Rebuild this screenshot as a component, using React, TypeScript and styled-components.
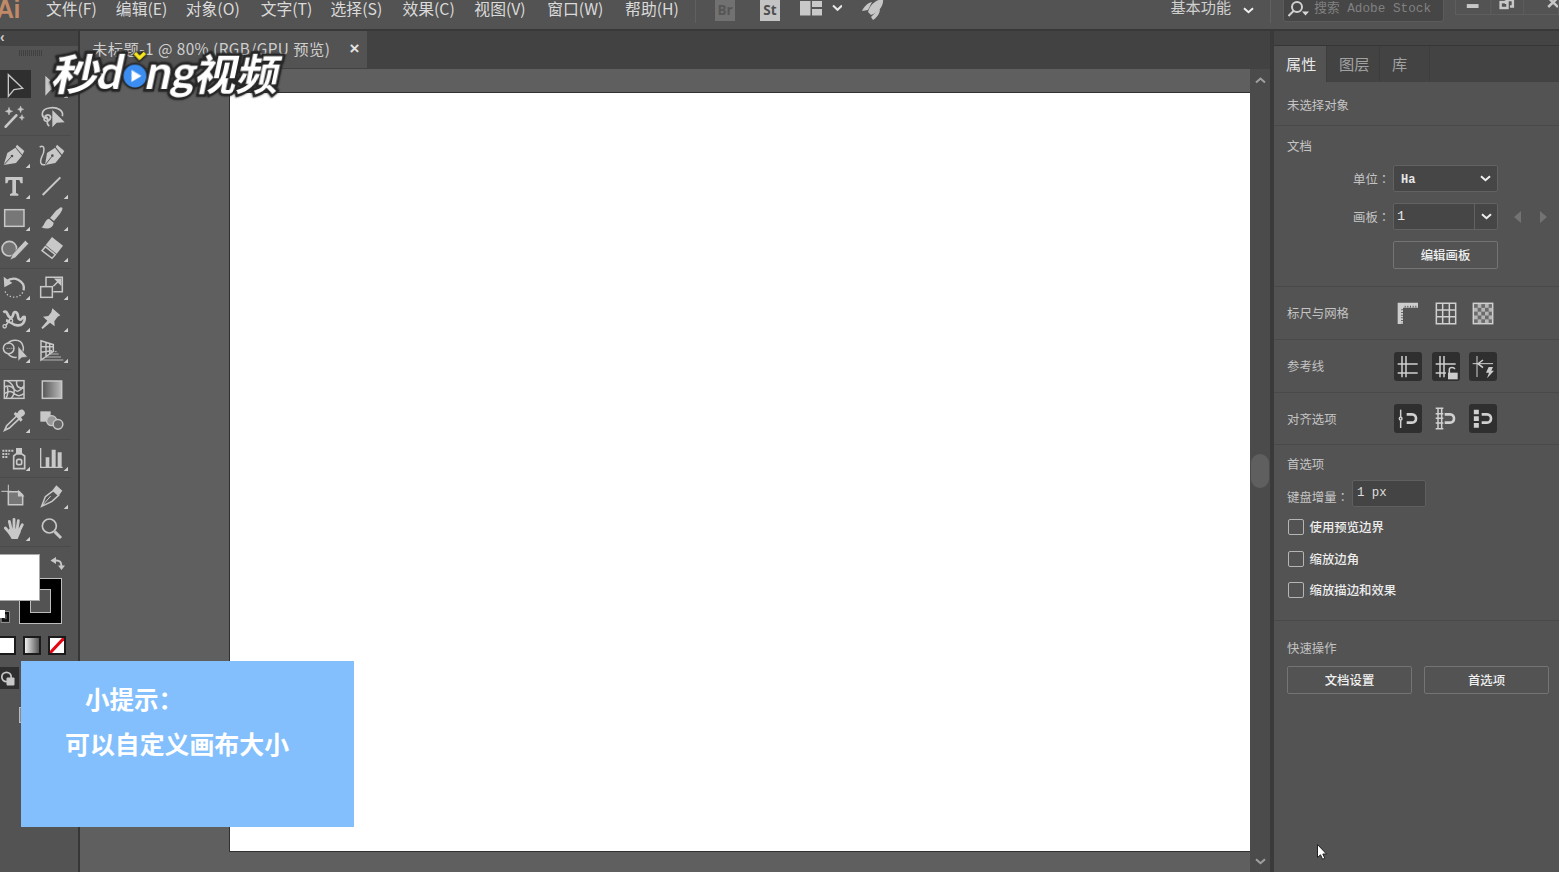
import React from 'react';
import styled, { createGlobalStyle } from 'styled-components';

const GlobalStyle = createGlobalStyle`
  *, *::before, *::after { box-sizing: border-box; }
  html, body { margin: 0; padding: 0; background: #535353; overflow: hidden; }
  body { font-family: "Noto Sans CJK SC", sans-serif; color: #d6d6d6; }
`;

const Window = styled.div`
  position: relative;
  width: 1559px;
  height: 872px;
  display: flex;
  flex-direction: column;
  overflow: hidden;
  background: #535353;
`;

/* ---------- menu bar ---------- */
const MenuBar = styled.header`
  height: 31px;
  flex: none;
  display: flex;
  background: #535353;
  border-bottom: 2px solid #383838;
`;
const Brand = styled.div`
  width: 46px;
  font: 700 25px/19px "Liberation Sans", sans-serif;
  color: #c08a68;
  margin-left: -4px;
  margin-right: 4px;
  letter-spacing: -0.5px;
`;
const MenuItem = styled.div<{ $w: number }>`
  width: ${p => p.$w}px;
  font-size: 15.8px;
  line-height: 18px;
  white-space: nowrap;
  color: #dadada;
`;
const Rule = styled.div<{ $h?: number }>`
  width: 1px;
  height: ${p => p.$h ?? 23}px;
  background: #606060;
`;
const AppBadge = styled.div<{ $dim?: boolean }>`
  width: 20px;
  height: 21px;
  font: 700 13.5px/20px "Open Sans", sans-serif;
  text-align: center;
  color: ${p => (p.$dim ? '#565656' : '#4e4e4e')};
  background: ${p => (p.$dim ? '#717171' : '#c4c4c4')};
`;
const Quick = styled.div`
  display: flex;
  width: 462px;
  padding-left: 19px;
  gap: 25px;
  svg { display: block; }
`;
const Workspace = styled.div`
  display: flex;
  justify-content: space-between;
  width: 113px;
  padding: 0 16px 0 13px;
  font-size: 15.2px;
  line-height: 12px;
  white-space: nowrap;
  color: #d0d0d0;
  svg { margin-top: 7px; }
`;
const Search = styled.div`
  display: flex;
  width: 161px;
  height: 22px;
  margin-left: 12px;
  padding-left: 4px;
  background: #464646;
  border: 1px solid #5b5b5b;
  border-top: 0;
  border-radius: 0 0 3px 3px;
  font: 12.7px/18px "Liberation Mono", "Noto Sans CJK SC", monospace;
  color: #818181;
  white-space: nowrap;
  svg { flex: none; margin-right: 4px; }
`;
const WindowButtons = styled.div`
  display: flex;
  margin-left: 11px;
  width: 104px;
  height: 15px;
  border: 1px solid #5e5e5e;
  border-top: 0;
`;

/* ---------- body ---------- */
const Body = styled.div`
  flex: 1;
  display: flex;
  min-height: 0;
`;
const ToolColumn = styled.aside`
  width: 80px;
  flex: none;
  overflow: hidden;
  border-right: 2px solid #363636;
`;
const ToolHeader = styled.div`
  height: 15px;
  background: #444;
  font: 700 14px/12px "Liberation Sans", sans-serif;
  color: #ccc;
`;
const Grip = styled.div`
  height: 6px;
  width: 24px;
  margin: 4px 0 13px 19px;
  background: repeating-linear-gradient(90deg, #404040 0 1px, #535353 1px 2px);
`;
const ToolGroup = styled.div`
  display: flex;
  flex-wrap: wrap;
  width: 76px;
  margin-left: -5px;
  padding-bottom: 3px;
  margin-bottom: 2.7px;
  border-bottom: 1px solid #4a4a4a;
`;
const Tool = styled.div<{ $active?: boolean }>`
  width: 38px;
  height: 31.5px;
  background: ${p => (p.$active ? 'linear-gradient(#2f2f2f,#2f2f2f) 0 1px / 36px 28px no-repeat' : 'none')};
  svg { display: block; }
`;
const ColorArea = styled.div`
  position: relative;
  height: 87px;
  margin-top: -1px;
`;
const StrokeSwatch = styled.div`
  position: absolute;
  left: 19px;
  top: 29px;
  width: 43px;
  height: 46px;
  border: 1px solid #bdbdbd;
  background: #000;
  padding: 10px;
  &::after { content: ''; display: block; height: 100%; background: #535353; border: 1px solid #bdbdbd; }
`;
const FillSwatch = styled.div`
  position: absolute;
  left: -2px;
  top: 5px;
  width: 42px;
  height: 47px;
  background: #fff;
  border: 1px solid #aaa;
`;
const SwapIcon = styled.svg`
  position: absolute;
  left: 50px;
  top: 7px;
`;
const DefaultIcon = styled.svg`
  position: absolute;
  left: 0;
  top: 60px;
`;
const Modes = styled.div`
  display: flex;
  gap: 7px;
  margin-left: -2px;
`;
const Mode = styled.div<{ $bg: string }>`
  width: 18px;
  height: 19px;
  border: 2px solid #1b1b1b;
  background: ${p => p.$bg};
  svg { display: block; }
`;
const DrawMode = styled.div`
  width: 19px;
  height: 22px;
  margin-top: 12px;
  background: #2f2f2f;
`;
const ScreenMode = styled.div`
  width: 14px;
  height: 16px;
  margin: 18px 0 0 19px;
  background: #888;
  border: 1px solid #bbb;
`;

/* ---------- document ---------- */
const Document = styled.main`
  width: 1190px;
  flex: none;
  display: flex;
  flex-direction: column;
`;
const TabStrip = styled.div`
  height: 38px;
  flex: none;
  background: #424242;
`;
const DocTab = styled.div`
  display: flex;
  justify-content: space-between;
  width: 287px;
  height: 37px;
  padding: 0 7px 0 12px;
  background: #535353;
  color: #cfcfcf;
  font-size: 15.3px;
  letter-spacing: 0.46px;
  line-height: 34px;
  white-space: nowrap;
`;
const CloseMark = styled.span`
  font: 700 17px/35px "Liberation Sans", sans-serif;
  color: #e2e2e2;
`;
const CanvasRow = styled.div`
  flex: 1;
  display: flex;
  min-height: 0;
`;
const Pasteboard = styled.div`
  flex: 1;
  background: #5f5f5f;
  padding: 23px 0 20px 149px;
`;
const Artboard = styled.div`
  height: 100%;
  background: #fff;
  border: 1px solid #303030;
  border-right: 0;
`;
const ScrollBar = styled.div`
  width: 20px;
  display: flex;
  flex-direction: column;
  align-items: center;
  justify-content: space-between;
  padding: 8px 0 7px;
  background: #4b4b4b;
`;
const Thumb = styled.div`
  width: 18px;
  height: 34px;
  border-radius: 9px;
  background: #5f5f5f;
`;

/* ---------- properties panel ---------- */
const Panel = styled.aside`
  flex: 1;
  border-left: 4px solid #3a3a3a;
  display: flex;
  flex-direction: column;
  font-family: "Liberation Mono", "Noto Sans CJK SC", monospace;
  font-size: 12.4px;
`;
const PanelHeader = styled.div`
  height: 15px;
  background: #444;
  border-bottom: 1px solid #363636;
`;
const PanelTabs = styled.div`
  display: flex;
  height: 36px;
  background: #434343;
`;
const PanelTab = styled.div<{ $w: number; $active?: boolean }>`
  width: ${p => p.$w}px;
  padding-left: 12px;
  font: 15.2px/34px "Noto Sans CJK SC", sans-serif;
  background: ${p => (p.$active ? '#535353' : 'transparent')};
  color: ${p => (p.$active ? '#e8e8e8' : '#a2a2a2')};
  border-right: 1px solid #3d3d3d;
`;
const Section = styled.section<{ $h: number; $row?: boolean; $top?: number; $last?: boolean }>`
  height: ${p => p.$h}px;
  padding: ${p => p.$top ?? 0}px 0 0 13px;
  display: ${p => (p.$row ? 'flex' : 'block')};
  align-items: center;
  border-bottom: ${p => (p.$last ? 0 : 1)}px solid #494949;
`;
const Label = styled.div<{ $w?: number }>`
  width: ${p => (p.$w ? p.$w + 'px' : 'auto')};
  height: 18px;
  line-height: 22px;
  white-space: nowrap;
  color: #c4c4c4;
`;
const Colon = styled.span`
  font-family: "Noto Sans CJK TC", sans-serif;
  line-height: 1;
`;
const Field = styled.div<{ $top: number }>`
  display: flex;
  align-items: center;
  margin-top: ${p => p.$top}px;
  padding-left: 66px;
`;
const Dropdown = styled.div<{ $split?: boolean }>`
  width: 105px;
  height: 27px;
  display: flex;
  align-items: center;
  border: 1px solid #626262;
  border-radius: 2px;
  background: #464646;
  color: #e6e6e6;
  span { flex: 1; padding: ${p => (p.$split ? '0 0 0 3px' : '3px 0 0 7px')}; line-height: 22px; font-size: ${p => (p.$split ? 13.5 : 12)}px; font-weight: ${p => (p.$split ? 400 : 700)}; }
  i { display: flex; align-items: center; justify-content: center; width: 23px; height: 25px; border-left: ${p => (p.$split ? '1px solid #626262' : '0')}; }
`;
const Arrows = styled.div`
  display: flex;
  gap: 19px;
  margin-left: 16px;
`;
const PanelButton = styled.div<{ $w: number }>`
  width: ${p => p.$w}px;
  height: 28px;
  border: 1px solid #747474;
  border-radius: 2px;
  text-align: center;
  line-height: 31px;
  color: #f0f0f0;
  font-weight: 500;
`;
const IconRow = styled.div`
  display: flex;
  gap: 9.5px;
`;
const IconBox = styled.div<{ $on?: boolean }>`
  width: 28px;
  height: 29px;
  border-radius: 3px;
  background: ${p => (p.$on ? '#2f2f2f' : 'transparent')};
  svg { display: block; }
`;
const IncrementRow = styled.div`
  display: flex;
  align-items: center;
  margin-top: 7px;
`;
const IncrementLabel = styled(Label)`
  line-height: 28px;
`;
const NumberField = styled.div`
  width: 74px;
  height: 27px;
  padding-left: 4px;
  background: #444;
  border: 1px solid #5f5f5f;
  border-radius: 2px;
  line-height: 25px;
  color: #dedede;
`;
const Checks = styled.div`
  margin-top: 4px;
`;
const CheckRow = styled.div`
  display: flex;
  align-items: center;
  gap: 6px;
  height: 31.7px;
  color: #ececec;
  font-weight: 500;
  &::before { content: ''; width: 16px; height: 16px; margin-left: 0.5px; border: 1.5px solid #b5b5b5; border-radius: 2px; }
`;
const Buttons = styled.div`
  display: flex;
  gap: 12px;
  margin-top: 9px;
`;

/* ---------- overlays ---------- */
const Tip = styled.div`
  position: absolute;
  left: 21px;
  top: 661px;
  width: 333px;
  height: 166px;
  padding: 16px 0 0 44px;
  background: #83bffd;
  color: #fff;
  font: 700 24.9px/44px "Noto Sans CJK SC", sans-serif;
  white-space: nowrap;
`;
const TipTitle = styled.div`
  padding-left: 20px;
  font-size: 24.5px;
`;
const Watermark = styled.div`
  position: absolute;
  left: 54px;
  top: 45px;
  display: flex;
  align-items: center;
  height: 54px;
  transform: skewX(-12deg);
  color: #fff;
  white-space: nowrap;
  filter: drop-shadow(0 0 1px #222);
`;
const MarkHan = styled.span<{ $w: number; $stretch?: number }>`
  width: ${p => p.$w}px;
  font: 700 42px/52px "Noto Sans CJK SC", sans-serif;
  -webkit-text-stroke: 5px #262626;
  paint-order: stroke fill;
  transform: scaleX(${p => p.$stretch ?? 1});
  transform-origin: 0 50%;
`;
const MarkLatin = styled.span<{ $w: number }>`
  width: ${p => p.$w}px;
  font: 700 46px/52px Lato, sans-serif;
  -webkit-text-stroke: 5px #262626;
  paint-order: stroke fill;
`;
const PlayMark = styled.svg`
  transform: skewX(12deg);
  overflow: visible;
  position: relative;
  z-index: 1;
`;
const Pointer = styled.svg`
  position: absolute;
  left: 1315px;
  top: 843px;
`;

const C = '#c8c8c8';
const BG = '#535353';

const Chevron = ({ up, color = '#f0f0f0', w = 11 }: { up?: boolean; color?: string; w?: number }) => (
  <svg width={w} height={7} viewBox="0 0 11 7" fill="none" stroke={color} strokeWidth="2">
    <path d={up ? 'M1 5.5 5.5 1.5 10 5.5' : 'M1 1.2 5.5 5.2 10 1.2'} />
  </svg>
);

/* Tool glyphs: three units per pixel, the origin at the middle of the cell. */
const glyphs: Record<string, React.ReactNode> = {
  select: <path d="M-17-33V32L0 12 26 8Z" fill="none" stroke={C} strokeWidth="4" />,
  direct: <path d="M-20-30V30L-4 13 20 8Z" fill={C} />,
  wand: (
    <g fill={C}>
      <path d="M-25 27 7-7" stroke={C} strokeWidth="8" strokeLinecap="round" />
      <path d="M-15-31-12-22-4-19-12-16-15-8-18-16-26-19-18-22ZM20-35 22-28 29-25 22-22 20-15 17-22 11-25 17-28ZM24-9 26-3 31 0 26 2 24 8 21 2 16 0 21-3Z" stroke={C} strokeWidth="1.5" />
    </g>
  ),
  lasso: (
    <g fill="none" stroke={C} strokeWidth="5">
      <path d="M-14 4C-36-2-34-25-8-29 16-33 36-22 31-4" />
      <path d="M-22-3C-12-14 0-6-6 5-14 17-29 8-22 1-14-4-10 4-14 12-15 20-12 23-8 25" />
      <path d="M1-23V29L14 15 38 14Z" fill={C} stroke="none" />
    </g>
  ),
  pen: (
    <g>
      <path d="M-31 28-20-8 4-24 24 0 6 22Z" fill={C} />
      <path d="M9-33 31-14 25-3 5-26Z" fill={C} />
      <path d="M-30 27-8 3" stroke={BG} strokeWidth="3" />
      <circle cx="-6" cy="1" r="4" fill={BG} />
    </g>
  ),
  curve: (
    <g>
      <path d="M-21 28-15-8 9-24 28 0 10 22Z" fill={C} />
      <path d="M15-33 37-14 30-3 11-26Z" fill={C} />
      <path d="M-20 27-1 3" stroke={BG} strokeWidth="3" />
      <circle cx="1" cy="0" r="4" fill={BG} />
      <path d="M-37-26C-18-36-24-8-30 2-38 20-34 30-20 27" fill="none" stroke={C} strokeWidth="4.5" />
    </g>
  ),
  type: <path d="M-26-29H26V-10H20L16-20H6V19L13 22V27H-12V22L-5 19V-20H-16L-20-10H-26Z" fill={C} />,
  line: <path d="M-28 25 25-28" stroke={C} strokeWidth="6" />,
  rect: <rect x="-28" y="-27" width="58" height="50" fill="#777" stroke={C} strokeWidth="4.5" />,
  brush: (
    <g fill={C}>
      <path d="M26-34C36-34 30-24 24-15L6 7-6-2 12-24Z" />
      <path d="M-9 0 5 12C4 28-14 34-32 26-22 22-22 2-9 0Z" />
    </g>
  ),
  shaper: (
    <g>
      <circle cx="-14" cy="-3" r="22" fill="#737373" stroke={C} strokeWidth="5" />
      <path d="M34-28 44-18 4 24-12 31-5 14Z" fill={C} stroke={BG} strokeWidth="2" />
    </g>
  ),
  eraser: (
    <g fill={C}>
      <path d="M0-38 33-12 14 13-19-14Z" />
      <path d="M-20-9 10 15 0 26-30 3Z" fill="none" stroke={C} strokeWidth="4.5" />
    </g>
  ),
  rotate: (
    <g fill="none" stroke={C}>
      <path d="M-23-18C0-38 34-20 29 8" strokeWidth="7" />
      <path d="M-31-33-29-1-5-14Z" fill={C} stroke="none" />
      <path d="M26 14C16 34-20 34-28 8" strokeWidth="4" strokeDasharray="4 6" />
    </g>
  ),
  scale: (
    <g fill="none" stroke={C} strokeWidth="4.5">
      <path d="M-18-3V-31H31V12H4" />
      <rect x="-34" y="-3" width="35" height="32" />
      <path d="M4-4 22-22" />
      <path d="M11-25H26V-10Z" fill={C} />
    </g>
  ),
  width: (
    <g fill="none" stroke={C} strokeWidth="8" strokeLinejoin="round">
      <path d="M-32-22C-18-32-22-8-10-6 0-4-6-26 6-22 16-18 8-2 18 0 26 1 24-12 32-8 34 8 24 18 10 17-6 17-10 4-24 2" />
      <path d="M-28 22 0-16" strokeWidth="5" />
      <circle cx="-28" cy="20" r="5" strokeWidth="4" fill={BG} />
      <circle cx="-9" cy="3" r="5" strokeWidth="4" fill={BG} />
    </g>
  ),
  pin: <path d="M1-34 25-13 17-9 7 5 8 20-6 9-28 28-32 24-14 3-27-9-11-11-2-22Z" fill={C} />,
  builder: (
    <g fill="none" stroke={C} strokeWidth="4.5">
      <circle cx="-16" cy="-7" r="16" />
      <path d="M-20-20C-12-32 20-40 27-14 30-4 26 4 22 8M-18 9C-10 19-2 21 8 20" />
      <path d="M-22-7H0" strokeWidth="3" strokeDasharray="3 3" />
      <path d="M12-14V32L23 21 41 19Z" fill={C} stroke={BG} strokeWidth="2" />
    </g>
  ),
  perspective: (
    <g fill="none" stroke={C} strokeWidth="4.5">
      <path d="M-33-30V28L4 2V-18ZM-18-26V16M-7-22V9M-33-12 4-12M-33 5 0 0" />
      <path d="M8 3H14M-8 10H20M-18 19H27M-30 28H34" strokeWidth="2.5" />
    </g>
  ),
  mesh: (
    <g fill="none" stroke={C} strokeWidth="4.5">
      <rect x="-29" y="-27" width="59" height="53" />
      <path d="M-20-27C4-12 6 8-8 26M8-27C6-10 12-4 30-4M-29-8C-18-14-6-10 2 0 8 8 18 6 30-12M-29 12C-12 2-8 4 4 14 12 20 22 18 30 12M-24 26C-18 14-16 6-20-8" />
    </g>
  ),
  gradient: <rect x="-29" y="-26" width="58" height="52" fill="url(#toolGradient)" stroke={C} strokeWidth="4.5" />,
  eyedropper: (
    <g>
      <path d="M8-14-22 15-28 29-14 22 16-6" fill="none" stroke={C} strokeWidth="5" />
      <path d="M31-28C25-38 14-32 10-22L4-26-1-20 20 3 26-3 21-10C31-15 36-20 31-28Z" fill={C} />
    </g>
  ),
  blend: (
    <g>
      <rect x="-35" y="-28" width="31" height="31" fill={C} />
      <circle cx="-1" cy="0" r="15" fill="#999" stroke={C} strokeWidth="4" />
      <circle cx="18" cy="11" r="14.5" fill="#666" stroke={C} strokeWidth="4.5" />
    </g>
  ),
  spray: (
    <g fill="none" stroke={C} strokeWidth="5">
      <path d="M-35-24H-1M-35-14H-14M-35-5H-20" strokeWidth="6" strokeDasharray="6 3" />
      <path d="M-1 30V-8L6-14H24L32-8V30Z" />
      <path d="M6-32H24V-14H6Z" fill={C} stroke="none" />
      <rect x="8" y="2" width="15" height="16" rx="5" />
    </g>
  ),
  chart: (
    <g fill={C}>
      <path d="M-36-32H-32V24H32V28H-36Z" />
      <path d="M-19-4H-8V25H-19ZM-1-27H11V25H-1ZM17-19H29V25H17Z" />
    </g>
  ),
  artboard: (
    <g fill="none" stroke={C} strokeWidth="4.5">
      <path d="M-38-16H-8M-17-36V-10" strokeWidth="3" />
      <path d="M-17-15H16L26-5V24H-17Z" fill="#777" />
      <path d="M14-15V-3H26Z" fill={C} />
    </g>
  ),
  slice: (
    <g>
      <path d="M4-18-20 0-31 29 0 14 20-4Z" fill="none" stroke={C} strokeWidth="4.5" />
      <path d="M-29 27-4-2" stroke={C} strokeWidth="3" />
      <path d="M13-34 31-18 21-4 2-20Z" fill={C} />
    </g>
  ),
  hand: (
    <g fill="none" stroke={C} strokeWidth="8.5" strokeLinecap="round">
      <path d="M-14-22-8 4M0-28V2M13-24 9 4M25-12 14 10M-26-2-10 16" />
      <path d="M-14 0H16L20 10 11 31H-7L-18 12Z" fill={C} stroke="none" />
    </g>
  ),
  zoom: (
    <g fill="none" stroke={C}>
      <circle cx="-8" cy="-8" r="21" strokeWidth="5" />
      <path d="M8 9 27 28" strokeWidth="9" />
    </g>
  ),
};

const groups: string[][] = [
  ['select', 'direct+', 'wand', 'lasso'],
  ['pen+', 'curve', 'type+', 'line+', 'rect+', 'brush+', 'shaper+', 'eraser+'],
  ['rotate+', 'scale+', 'width+', 'pin+', 'builder+', 'perspective+'],
  ['mesh', 'gradient', 'eyedropper+', 'blend'],
  ['spray+', 'chart+'],
  ['artboard', 'slice+', 'hand+', 'zoom'],
];

const ToolIcon = ({ name }: { name: string }) => (
  <Tool $active={name === 'select'}>
    <svg width="38" height="31.5" viewBox="-57 -50 114 94.5" overflow="visible">
      {glyphs[name.replace('+', '')]}
      {name.endsWith('+') && <path d="M48 24V37H35Z" fill="#d0d0d0" />}
    </svg>
  </Tool>
);

/* Panel glyphs: three units per pixel in a 28 x 29 button. */
const PanelIcon = ({ on, children }: { on?: boolean; children: React.ReactNode }) => (
  <IconBox $on={on}>
    <svg width="28" height="29" viewBox="-42 -43 84 87" fill="none" stroke="#d0d0d0" strokeWidth="4.5">
      {children}
    </svg>
  </IconBox>
);
const magnet = <path d="M-4-12H12C28-12 28 13 12 13H-4" strokeWidth="8" />;
const checks: [number, number][] = [];
for (let r = 0; r < 5; r++) for (let c = 0; c < 5; c++) if ((r + c) % 2) checks.push([c, r]);

export default function App() {
  const menus: [string, number][] = [
    ['文件(F)', 70], ['编辑(E)', 70], ['对象(O)', 75], ['文字(T)', 70], ['选择(S)', 72],
    ['效果(C)', 72], ['视图(V)', 73], ['窗口(W)', 78], ['帮助(H)', 70],
  ];
  return (
    <Window>
      <GlobalStyle />
      <MenuBar>
        <Brand>Ai</Brand>
        {menus.map(([t, w]) => <MenuItem key={t} $w={w}>{t}</MenuItem>)}
        <Rule />
        <Quick>
          <AppBadge $dim>Br</AppBadge>
          <AppBadge>St</AppBadge>
          <svg width="42" height="18" viewBox="0 0 42 18" style={{ marginLeft: -5 }}>
            <path d="M0 1H10.5V15.5H0ZM12 1H22V7H12ZM12 9H22V15.5H12Z" fill="#c8c8c8" />
            <path d="M33 5.5 37.5 9.8 42 5.5" fill="none" stroke="#e8e8e8" strokeWidth="2" />
          </svg>
          <svg width="23" height="21" viewBox="0 0 23 21" fill="#c6c6c6" style={{ marginLeft: -5 }}>
            <path d="M21-1C22 6 16 13 9 15L6 12C8 5 13 0 21-1Z" />
            <path d="M10 2C5 3 2 7 0 11L6 10ZM18 9C18 14 14 18 11 20L9 17 13 13Z" />
          </svg>
        </Quick>
        <Workspace><span>基本功能</span><Chevron /></Workspace>
        <Rule />
        <Search>
          <svg width="22" height="20" viewBox="0 0 22 20" fill="none" stroke="#d0d0d0" strokeWidth="2">
            <circle cx="9" cy="7" r="5" /><path d="M5.5 11 0.5 16" /><path d="M14 11.5H21L17.5 15.5Z" fill="#d8d8d8" stroke="none" />
          </svg>
          搜索 Adobe Stock
        </Search>
        <WindowButtons>
          <svg width="104" height="15" viewBox="0 0 104 15" fill="none" stroke="#c8c8c8" strokeWidth="2.5">
            <path d="M11 6H23" strokeWidth="4" />
            <path d="M35.5 0V14M69 0V14" stroke="#5e5e5e" strokeWidth="1" />
            <path d="M51 0V4M51 0H58V6.5H55" /><rect x="45.5" y="2" width="7" height="6" />
            <path d="M94 7 104-2.5M94-2.5 104 7" />
          </svg>
        </WindowButtons>
      </MenuBar>

      <Body>
        <ToolColumn>
          <ToolHeader>‹</ToolHeader>
          <Grip />
          <svg width="0" height="0" style={{ display: 'block' }}>
            <linearGradient id="toolGradient"><stop stopColor="#555" /><stop offset="1" stopColor="#bbb" /></linearGradient>
          </svg>
          {groups.map((g, i) => (
            <ToolGroup key={i}>{g.map(n => <ToolIcon key={n} name={n} />)}</ToolGroup>
          ))}
          <ColorArea>
            <StrokeSwatch />
            <FillSwatch />
            <SwapIcon width="16" height="16" viewBox="0 0 16 16">
              <path d="M5 4.5C10 4 11.5 6 11.5 11" fill="none" stroke={C} strokeWidth="2" />
              <path d="M6 1V8L0.5 4.5ZM8 9.5H15L11.5 14Z" fill={C} />
            </SwapIcon>
            <DefaultIcon width="10" height="14" viewBox="0 0 10 14">
              <path d="M3 4H8V11.5H3Z" fill="#535353" stroke="#111" strokeWidth="2.5" />
              <path d="M5 2.5H9.5V13.5H1V9" fill="none" stroke="#aaa" strokeWidth="0.7" />
              <path d="M0 1H5V9H0Z" fill="#fff" />
            </DefaultIcon>
          </ColorArea>
          <Modes>
            <Mode $bg="#fff" />
            <Mode $bg="linear-gradient(90deg,#eee,#555)" />
            <Mode $bg="#fff">
              <svg width="14" height="15" viewBox="0 0 14 15"><path d="M0 15 14 0" stroke="#e30613" strokeWidth="3" /></svg>
            </Mode>
          </Modes>
          <DrawMode>
            <svg width="19" height="22" viewBox="0 0 19 22">
              <circle cx="6.5" cy="10" r="4.7" fill="none" stroke={C} strokeWidth="1.7" />
              <rect x="6.5" y="10.5" width="8" height="8" rx="1" fill={C} />
            </svg>
          </DrawMode>
          <ScreenMode />
        </ToolColumn>

        <Document>
          <TabStrip>
            <DocTab><span>未标题-1 @ 80% (RGB/GPU 预览)</span><CloseMark>×</CloseMark></DocTab>
          </TabStrip>
          <CanvasRow>
            <Pasteboard><Artboard /></Pasteboard>
            <ScrollBar>
              <Chevron up color="#a0a0a0" />
              <Thumb />
              <Chevron color="#a0a0a0" />
            </ScrollBar>
          </CanvasRow>
        </Document>

        <Panel>
          <PanelHeader />
          <PanelTabs>
            <PanelTab $w={53} $active>属性</PanelTab>
            <PanelTab $w={53}>图层</PanelTab>
            <PanelTab $w={50}>库</PanelTab>
          </PanelTabs>
          <Section $h={44} $top={14}><Label>未选择对象</Label></Section>
          <Section $h={161} $top={11}>
            <Label>文档</Label>
            <Field $top={10}>
              <Label $w={40}>单位<Colon>：</Colon></Label>
              <Dropdown><span>Ha</span><i><Chevron /></i></Dropdown>
            </Field>
            <Field $top={11}>
              <Label $w={40}>画板<Colon>：</Colon></Label>
              <Dropdown $split><span>1</span><i><Chevron /></i></Dropdown>
              <Arrows>
                <svg width="7" height="12"><path d="M7 0V12L0 6Z" fill="#737373" /></svg>
                <svg width="7" height="12"><path d="M0 0V12L7 6Z" fill="#737373" /></svg>
              </Arrows>
            </Field>
            <Field $top={11}>
              <Label $w={40} />
              <PanelButton $w={105}>编辑画板</PanelButton>
            </Field>
          </Section>
          <Section $h={53} $row>
            <Label $w={107}>标尺与网格</Label>
            <IconRow>
              <PanelIcon>
                <path d="M-31-32H30V-17H-15V32H-31Z" fill="#cdcdcd" stroke="none" />
                <path d="M-10-20H28M-18-12V30" stroke="#535353" strokeWidth="5" strokeDasharray="3 5" />
              </PanelIcon>
              <PanelIcon><path d="M-29-30H29V31H-29ZM-10-30V31M10-30V31M-29-10H29M-29 10H29" /></PanelIcon>
              <PanelIcon>
                <rect x="-29" y="-30" width="58" height="61" fill="#6b6b6b" />
                {checks.map(([c, r]) => <rect key={`${c}${r}`} x={-27 + c * 11} y={-28 + r * 11.5} width="11" height="11.5" fill="#b5b5b5" stroke="none" />)}
              </PanelIcon>
            </IconRow>
          </Section>
          <Section $h={53} $row>
            <Label $w={107}>参考线</Label>
            <IconRow>
              <PanelIcon on><path d="M-31-7H29M-31 20H29M-18-31V33M-6-31V33" /></PanelIcon>
              <PanelIcon on>
                <path d="M-31-7H29M-31 20H0M-18-31V33M-6-31V33" />
                <path d="M10 20V9C10 2 26 2 26 9" />
                <rect x="6" y="19" width="29" height="20" fill="#cdcdcd" stroke="none" />
              </PanelIcon>
              <PanelIcon on>
                <path d="M-31-8H30M-18-31V32" strokeWidth="3" />
                <path d="M0-19-15-8 0 4" />
                <path d="M17 2H30L25 13H33L12 36 18 19H9Z" fill="#cdcdcd" stroke="none" />
              </PanelIcon>
            </IconRow>
          </Section>
          <Section $h={52} $row>
            <Label $w={107}>对齐选项</Label>
            <IconRow>
              <PanelIcon on><path d="M-22-26V29" /><circle cx="-22" cy="1" r="4" fill="#2f2f2f" />{magnet}</PanelIcon>
              <PanelIcon><path d="M-31-30H-8M-31 31H-8M-24-30V31M-13-30V31M-31-14H-8M-31 0H-8M-31 14H-8" />{magnet}</PanelIcon>
              <PanelIcon on><path d="M-20-26V29" strokeWidth="15" strokeDasharray="14 6" />{magnet}</PanelIcon>
            </IconRow>
          </Section>
          <Section $h={176} $top={10}>
            <Label>首选项</Label>
            <IncrementRow>
              <IncrementLabel $w={65}>键盘增量<Colon>：</Colon></IncrementLabel>
              <NumberField>1 px</NumberField>
            </IncrementRow>
            <Checks>
              <CheckRow>使用预览边界</CheckRow>
              <CheckRow>缩放边角</CheckRow>
              <CheckRow>缩放描边和效果</CheckRow>
            </Checks>
          </Section>
          <Section $h={90} $top={18} $last>
            <Label>快速操作</Label>
            <Buttons>
              <PanelButton $w={125}>文档设置</PanelButton>
              <PanelButton $w={125}>首选项</PanelButton>
            </Buttons>
          </Section>
        </Panel>
      </Body>

      <Watermark>
        <MarkHan $w={44} $stretch={1.13}>秒</MarkHan>
        <MarkLatin $w={25}>d</MarkLatin>
        <PlayMark width="24" height="34" viewBox="0 0 24 34">
          <circle cx="12" cy="21" r="13" fill="#262626" />
          <circle cx="12" cy="21" r="11.5" fill="#3b8df0" />
          <path d="M8.5 15V27L18.5 21Z" fill="#fff" />
          <path d="M12-2 16.5 3 22-2" fill="none" stroke="#262626" strokeWidth="6" />
          <path d="M12-2 16.5 3 22-2" fill="none" stroke="#f8e81c" strokeWidth="3.5" />
        </PlayMark>
        <MarkLatin $w={50}>ng</MarkLatin>
        <MarkHan $w={84}>视频</MarkHan>
      </Watermark>

      <Tip>
        <TipTitle>小提示：</TipTitle>
        <div>可以自定义画布大小</div>
      </Tip>
      <Pointer width="14" height="18" viewBox="0 0 14 18">
        <path d="M2.5 1.5V14.5L5.5 11.8 7.6 16.3 9.8 15.2 7.8 11H11.5Z" fill="#fff" stroke="#222" strokeWidth="1" />
      </Pointer>
    </Window>
  );
}
